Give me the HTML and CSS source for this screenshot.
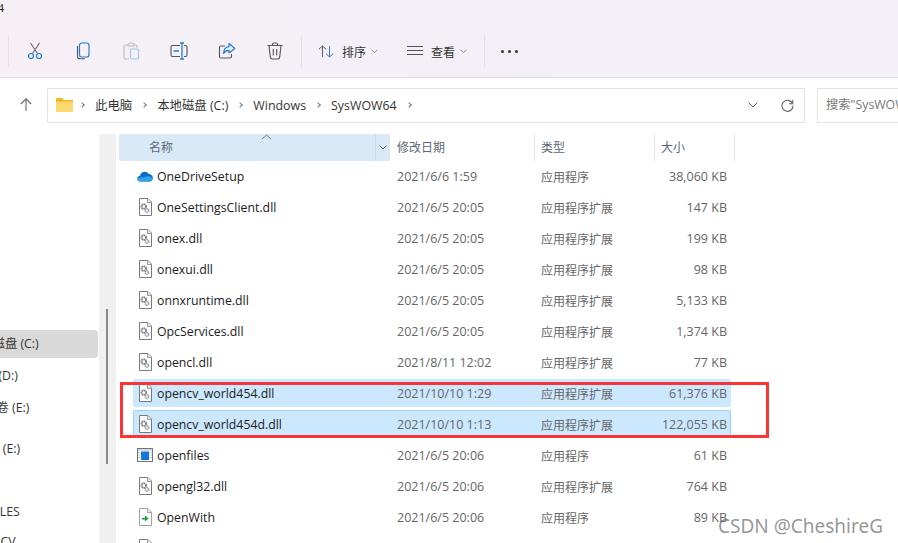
FILE: index.html
```html
<!DOCTYPE html>
<html lang="zh-CN">
<head>
<meta charset="utf-8">
<title>SysWOW64</title>
<link rel="stylesheet" href="styles.css">
</head>
<body>
<svg class="defs" width="0" height="0">
  <symbol id="dll" viewBox="0 0 16 18">
    <path d="M2.500 .5H11L14.500 4V17.500H2.500Z" fill="#fff" stroke="#77797c"/>
    <path d="M10.500 .5V4.500H14.500" fill="#e8e8e8" stroke="#9a9a9a"/>
    <circle cx="6.800" cy="8.600" r="2.300" fill="#fff" stroke="#7f848a" stroke-width="1.900" stroke-dasharray="1.500 .4"/>
    <circle cx="9.900" cy="12.400" r="1.700" fill="#fff" stroke="#a0a4a9" stroke-width="1.700" stroke-dasharray="1.300 .4"/>
  </symbol>
  <symbol id="app" viewBox="0 0 16 14">
    <rect x=".5" y=".5" width="15" height="13" fill="#fff" stroke="#70757a"/>
    <rect x="1" y="1" width="14" height="2" fill="#d8dadd"/>
    <rect x="4" y="3.500" width="8" height="8.500" fill="#0f78d4"/>
    <path d="M2 4v1M2 6.500v1M2 9v1M14 4v1M14 6.500v1M14 9v1" stroke="#808488"/>
  </symbol>
  <symbol id="with" viewBox="0 0 16 18">
    <path d="M2.500 .5H11L14.500 4V17.500H2.500Z" fill="#fff" stroke="#a0a2a4"/>
    <path d="M10.500 .5V4.500H14.500" fill="#e8e8e8" stroke="#a8a8a8"/>
    <path d="M5 10H8V7.500L11.500 10.500L8 13.500V11.500H5Z" fill="#14a32a"/>
  </symbol>
  <symbol id="cloud" viewBox="0 0 16 11">
    <path d="M4 10.500C1.800 10.500 .3 9.200 .3 7.600C.3 6 1.500 5 3 4.800C3.600 2.400 5.500 .8 7.800 .8C9.600 .8 11 1.700 11.800 3.100C14 3.100 15.800 4.800 15.800 7C15.800 9 14.300 10.500 12.400 10.500Z" fill="#0c6cc4"/>
    <path d="M3 10.500C1.500 10.500 .3 9.500 .3 8C2 6.500 5 6 7.200 6.500C9.500 4.800 13 5 15.800 7C15.800 9 14.300 10.500 12.400 10.500Z" fill="#2fa3ee"/>
  </symbol>
</svg>

<header class="toolbar">
  <div class="title">4</div>
  <div class="commands">
    <span class="sep"></span>
    <span class="cmd cmd-first">
      <svg width="18" height="18" viewBox="0 0 18 18" fill="none"><path d="M4.500 1L11.500 11.500M13.500 1L6.500 11.500" stroke="#6a6a6a" stroke-width="1.100"/><circle cx="5" cy="14" r="2.500" stroke="#1f7fd6" stroke-width="1.200"/><circle cx="13" cy="14" r="2.500" stroke="#1f7fd6" stroke-width="1.200"/></svg>
    </span>
    <span class="cmd">
      <svg width="18" height="18" viewBox="0 0 18 18" fill="none"><rect x="5.500" y="1" width="9.500" height="14" rx="2.200" stroke="#1f7fd6" stroke-width="1.200"/><path d="M3.500 4V14C3.500 15.800 4.800 16.800 6 16.800H11" stroke="#555" stroke-width="1.100"/></svg>
    </span>
    <span class="cmd">
      <svg width="18" height="18" viewBox="0 0 18 18" fill="none"><path d="M6 3H3.500C2.700 3 2 3.700 2 4.500V15.500C2 16.300 2.700 17 3.500 17H7M12 3H14C14.800 3 15 3.700 15 4.500V6M6 2.500C6 1.500 7 1 9 1C11 1 12 1.500 12 2.500V4H6Z" stroke="#bdbdbd" stroke-width="1.100"/><rect x="8.500" y="7" width="8" height="10" rx="1.500" stroke="#9cc8ee" stroke-width="1.200"/></svg>
    </span>
    <span class="cmd">
      <svg width="18" height="18" viewBox="0 0 18 18" fill="none"><path d="M10 3.500H2.500C1.700 3.500 1 4.200 1 5V13C1 13.800 1.700 14.500 2.500 14.500H10M14 3.500H15.500C16.300 3.500 17 4.200 17 5V13C17 13.800 16.300 14.500 15.500 14.500H14" stroke="#555" stroke-width="1.100"/><path d="M10 1H14M12 1V17M10 17H14M3.500 9H9" stroke="#1f7fd6" stroke-width="1.300"/></svg>
    </span>
    <span class="cmd">
      <svg width="18" height="18" viewBox="0 0 18 18" fill="none"><path d="M7 4H3C2 4 1.500 4.700 1.500 5.500V14.500C1.500 15.500 2 16 3 16H12C13 16 13.500 15.500 13.500 14.500V12" stroke="#555" stroke-width="1.100"/><path d="M11 1.500L16.800 6.500L11 11V8.300C8.500 8.300 6.800 9.300 5.500 11.500C5.800 7.800 8 5 11 4.700Z" stroke="#1f7fd6" stroke-width="1.200" stroke-linejoin="round"/></svg>
    </span>
    <span class="cmd">
      <svg width="18" height="18" viewBox="0 0 18 18" fill="none" stroke="#555" stroke-width="1.100"><path d="M1.500 3.500H16.500M6.500 3.500V2.500C6.500 1.500 7 1 8 1H10C11 1 11.500 1.500 11.500 2.500V3.500M3 3.500L4.300 15C4.400 16.200 5 17 6.300 17H11.700C13 17 13.600 16.200 13.700 15L15 3.500M7.300 7V13.500M10.700 7V13.500"/></svg>
    </span>
    <span class="sep sep-left"></span>
    <span class="menu menu-sort">
      <svg width="16" height="13" viewBox="0 0 18 14" fill="none"><path d="M1 4.500L5 .8L9 4.500M5 1V13" stroke="#555" stroke-width="1.100"/><path d="M9 9.500L13 13.200L17 9.500M13 13V1" stroke="#1f7fd6" stroke-width="1.100"/></svg>
      <span class="menu-label">排序</span>
      <svg class="chev" width="7" height="5" viewBox="0 0 7 5" fill="none"><path d="M.7 .8L3.500 3.800L6.300 .8" stroke="#8a8a8a"/></svg>
    </span>
    <span class="menu menu-view">
      <svg width="16" height="10" viewBox="0 0 16 10" fill="none" stroke="#555"><path d="M0 .5H16M0 4.500H16M0 8.500H16"/></svg>
      <span class="menu-label">查看</span>
      <svg class="chev" width="7" height="5" viewBox="0 0 7 5" fill="none"><path d="M.7 .8L3.500 3.800L6.300 .8" stroke="#8a8a8a"/></svg>
    </span>
    <span class="sep sep-more"></span>
    <span class="more"><i></i><i></i><i></i></span>
  </div>
</header>

<nav class="addressbar">
  <svg class="up" width="12" height="13" viewBox="0 0 12 13" fill="none"><path d="M.8 6L6 .8L11.200 6M6 1V13" stroke="#6b6b6b" stroke-width="1.100"/></svg>
  <div class="path">
    <svg class="folder" width="17" height="14" viewBox="0 0 17 14"><path d="M0 1.500C0 .7 .6 0 1.500 0H6L8 2H17V4H0Z" fill="#f2b51d"/><rect y="3.500" width="17" height="10.500" rx="1" fill="#fcd870"/></svg>
    <span class="crumb-sep"></span><span>此电脑</span>
    <span class="crumb-sep"></span><span>本地磁盘 (C:)</span>
    <span class="crumb-sep"></span><span>Windows</span>
    <span class="crumb-sep"></span><span>SysWOW64</span>
    <span class="crumb-sep"></span>
    <svg class="path-chev" width="10" height="6" viewBox="0 0 10 6" fill="none"><path d="M.7 .7L5 5L9.300 .7" stroke="#666"/></svg>
    <svg class="refresh" width="13" height="13" viewBox="0 0 13 13" fill="none"><path d="M11.500 4.500A5.500 5.500 0 1 0 12 6.500" stroke="#666" stroke-width="1.100"/><path d="M11.800 .8V4.700H7.900" stroke="#666" stroke-width="1.100"/></svg>
  </div>
  <div class="search">搜索"SysWOW64"</div>
</nav>

<main class="body">
  <aside class="sidebar">
    <div class="nav-item active"><span class="clip-c">本地磁盘 (C:)</span></div>
    <div class="nav-item"><span class="clip-d">本地磁盘 (D:)</span></div>
    <div class="nav-item"><span class="clip-e">新加卷 (E:)</span></div>
    <div class="nav-item gap-a"><span class="clip-f">本地 (E:)</span></div>
    <div class="nav-item gap-b"><span class="clip-g">FILES</span></div>
    <div class="nav-item"><span class="clip-h">OpenCV</span></div>
  </aside>
  <div class="track"><div class="thumb"></div></div>
  <section class="pane">
    <div class="head">
      <div class="h-name">名称<svg class="sort-up" width="11" height="6" viewBox="0 0 11 6" fill="none"><path d="M1 5L5.500 1L10 5" stroke="#777"/></svg></div>
      <div class="h-chev"><svg width="8" height="5" viewBox="0 0 8 5" fill="none"><path d="M.7 .7L4 4L7.300 .7" stroke="#5c6670"/></svg></div>
      <div class="h-date">修改日期</div>
      <div class="h-type">类型</div>
      <div class="h-size">大小</div>
    </div>

    <div class="row"><div class="name"><svg class="ic" width="16" height="11"><use href="#cloud"/></svg>OneDriveSetup</div><div class="date">2021/6/6 1:59</div><div class="type">应用程序</div><div class="size">38,060 KB</div></div>
    <div class="row"><div class="name"><svg class="ic" width="16" height="18"><use href="#dll"/></svg>OneSettingsClient.dll</div><div class="date">2021/6/5 20:05</div><div class="type">应用程序扩展</div><div class="size">147 KB</div></div>
    <div class="row"><div class="name"><svg class="ic" width="16" height="18"><use href="#dll"/></svg>onex.dll</div><div class="date">2021/6/5 20:05</div><div class="type">应用程序扩展</div><div class="size">199 KB</div></div>
    <div class="row"><div class="name"><svg class="ic" width="16" height="18"><use href="#dll"/></svg>onexui.dll</div><div class="date">2021/6/5 20:05</div><div class="type">应用程序扩展</div><div class="size">98 KB</div></div>
    <div class="row"><div class="name"><svg class="ic" width="16" height="18"><use href="#dll"/></svg>onnxruntime.dll</div><div class="date">2021/6/5 20:05</div><div class="type">应用程序扩展</div><div class="size">5,133 KB</div></div>
    <div class="row"><div class="name"><svg class="ic" width="16" height="18"><use href="#dll"/></svg>OpcServices.dll</div><div class="date">2021/6/5 20:05</div><div class="type">应用程序扩展</div><div class="size">1,374 KB</div></div>
    <div class="row"><div class="name"><svg class="ic" width="16" height="18"><use href="#dll"/></svg>opencl.dll</div><div class="date">2021/8/11 12:02</div><div class="type">应用程序扩展</div><div class="size">77 KB</div></div>
    <div class="row selected"><div class="name"><svg class="ic" width="16" height="18"><use href="#dll"/></svg>opencv_world454.dll</div><div class="date">2021/10/10 1:29</div><div class="type">应用程序扩展</div><div class="size">61,376 KB</div></div>
    <div class="row selected focused"><div class="name"><svg class="ic" width="16" height="18"><use href="#dll"/></svg>opencv_world454d.dll</div><div class="date">2021/10/10 1:13</div><div class="type">应用程序扩展</div><div class="size">122,055 KB</div></div>
    <div class="row"><div class="name"><svg class="ic" width="16" height="14"><use href="#app"/></svg>openfiles</div><div class="date">2021/6/5 20:06</div><div class="type">应用程序</div><div class="size">61 KB</div></div>
    <div class="row"><div class="name"><svg class="ic" width="16" height="18"><use href="#dll"/></svg>opengl32.dll</div><div class="date">2021/6/5 20:06</div><div class="type">应用程序扩展</div><div class="size">764 KB</div></div>
    <div class="row"><div class="name"><svg class="ic" width="16" height="18"><use href="#with"/></svg>OpenWith</div><div class="date">2021/6/5 20:06</div><div class="type">应用程序</div><div class="size">89 KB</div></div>
    <div class="row"><div class="name"><svg class="ic" width="16" height="18"><use href="#dll"/></svg>opengl.dll</div></div>
  </section>
</main>

<div class="redbox"></div>
<div class="watermark">CSDN @CheshireG</div>
</body>
</html>
```

FILE: styles.css
```css
* { box-sizing: border-box; }
html, body { margin: 0; padding: 0; }
body {
  width: 898px;
  height: 543px;
  overflow: hidden;
  position: relative;
  background: #fff;
  font-family: "Open Sans", "Noto Sans CJK SC", sans-serif;
  font-size: 12.3px;
  color: #1c1c1c;
}
.defs { position: absolute; }

/* toolbar */
.toolbar {
  height: 78px;
  background: linear-gradient(90deg, #f6eff6, #f3f0f8);
  border-bottom: 1px solid #e0dde2;
}
.title {
  height: 35px;
  font: 12px "Liberation Serif", serif;
  line-height: 17px;
  margin-left: -2px;
  color: #222;
}
.commands { height: 32px; display: flex; align-items: center; padding-left: 8px; }
.sep { width: 1px; height: 32px; background: #e4e0e6; flex: none; }
.sep-left { margin-left: 2px; }
.cmd { width: 48px; flex: none; display: flex; justify-content: center; }
.cmd-first { margin-left: 2px; }
.menu { display: flex; align-items: center; color: #333; font-size: 12px; }
.menu-sort { margin-left: 16px; }
.menu-view { margin-left: 29px; }
.menu-label { margin: 0 5px 0 8px; font-family: "Noto Sans CJK SC", sans-serif; }
.sep-more { margin-left: 17px; }
.more { display: flex; gap: 4px; margin-left: 16px; }
.more i { width: 3px; height: 3px; border-radius: 50%; background: #333; }

/* address */
.addressbar { height: 56px; display: flex; align-items: flex-start; padding: 10px 0 0 20px; overflow: hidden; }
.up { margin: 10px 15px 0 0; flex: none; }
.path {
  width: 758px;
  height: 35px;
  flex: none;
  border: 1.5px solid #e3e3e3;
  display: flex;
  align-items: center;
  padding: 0 0 1px 8px;
  color: #333;
  font-size: 12.4px;
  white-space: nowrap;
}
.crumb-sep {
  width: 4px; height: 4px;
  border-top: 1px solid #777;
  border-right: 1px solid #777;
  transform: rotate(45deg);
  margin: 0 11px 0 10px;
  flex: none;
}
.folder { flex: none; margin-right: -3px; }
.path-chev { margin-left: auto; }
.refresh { margin: 0 10px 0 23px; }
.search {
  width: 100px;
  height: 35px;
  flex: none;
  margin-left: 12px;
  border: 1.5px solid #e3e3e3;
  padding-left: 8px;
  line-height: 32px;
  color: #777;
  white-space: nowrap;
  overflow: hidden;
}

/* body */
.body { display: flex; height: 409px; overflow: hidden; }
.sidebar { width: 99px; flex: none; padding-top: 196px; overflow: hidden; color: #333; }
.nav-item { height: 28px; margin-bottom: 4px; line-height: 27px; white-space: nowrap; overflow: hidden; border-radius: 0 4px 4px 0; width: 98px; }
.nav-item.active { background: #d9d9d9; }
.gap-a { margin-top: 13px; }
.gap-b { margin-top: 35px; margin-bottom: 2px; }
.nav-item span { display: inline-block; }
.clip-c { margin-left: -32px; }
.clip-d { margin-left: -54px; }
.clip-e { margin-left: -28px; }
.clip-f { margin-left: -25px; }
.clip-g { margin-left: -10px; }
.clip-h { margin-left: -31px; }
.track { width: 17px; flex: none; background: #f0f0f0; position: relative; }
.thumb { position: absolute; left: 7px; top: 175px; width: 2px; height: 155px; background: #8a8a8a; }
.pane { flex: 1; padding-left: 3px; }

.head { display: flex; height: 27px; margin-bottom: 1px; width: 615px; color: #5d6874; font-size: 12px; font-family: "Noto Sans CJK SC", sans-serif; line-height: 26px; }
.head > div { flex: none; border-right: 1px solid #e7e7e7; }
.head > .h-name { width: 256px; padding-left: 30px; background: #d9e9f7; border-radius: 2px 0 0 2px; border-right: 0; position: relative; }
.sort-up { position: absolute; left: 142px; top: 0; }
.h-chev { width: 15px; background: #d9e9f7; border-left: 1px solid #c7dbec; display: flex; align-items: center; justify-content: center; }
.h-date { width: 145px; padding-left: 7px; }
.h-type { width: 120px; padding-left: 6px; }
.h-size { width: 80px; padding-left: 6px; }

.row {
  display: flex;
  height: 28px;
  width: 598px;
  margin: 0 0 3px 14px;
  align-items: center;
  border-radius: 2px;
  white-space: nowrap;
}
.row.selected { background: #cce8ff; }
.row.focused { box-shadow: inset 0 0 0 1px #99d1ff; }
.name { width: 257px; display: flex; align-items: center; color: #1c1c1c; }
.ic { width: 16px; margin: 0 4px 0 4px; flex: none; }
.date { width: 144px; padding-left: 7px; color: #666; font-size: 12.5px; }
.type { width: 120px; padding-left: 7px; color: #666; font-size: 12px; font-family: "Noto Sans CJK SC", sans-serif; }
.size { width: 77px; padding-right: 4px; text-align: right; color: #666; font-size: 12.5px; }

.redbox { position: absolute; left: 120px; top: 382px; width: 649px; height: 56px; border: 3px solid #fb3535; }
.watermark { position: absolute; left: 718px; top: 513px; font-family: "Noto Sans", sans-serif; font-size: 19px; color: rgba(110,110,110,.72); white-space: nowrap; }
```
